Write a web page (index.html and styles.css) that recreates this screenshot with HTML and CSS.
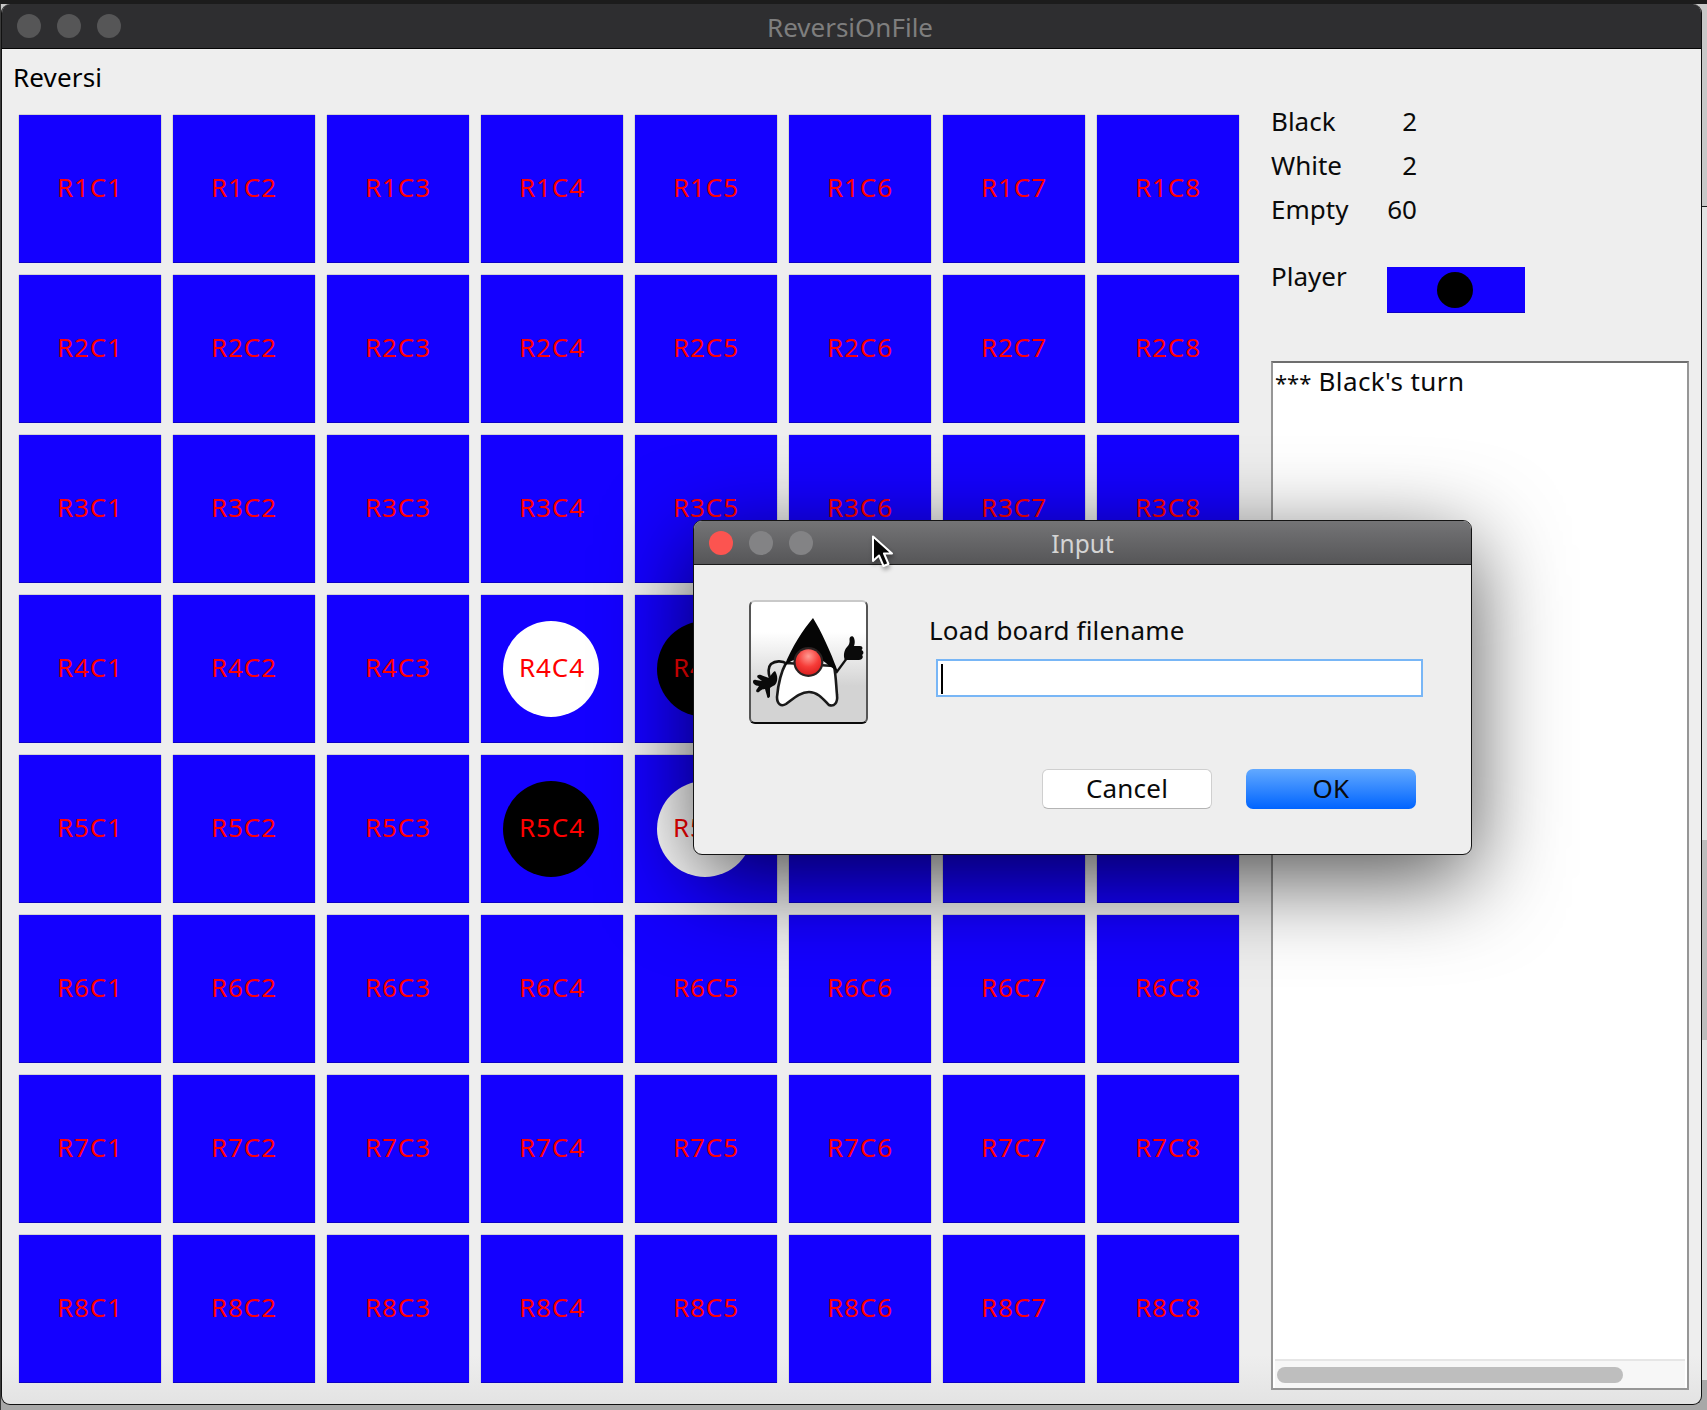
FILE: index.html
```html
<!DOCTYPE html>
<html lang="en">
<head>
<meta charset="utf-8">
<title>ReversiOnFile</title>
<link rel="stylesheet" href="styles.css">
</head>
<body>
<div class="desktop">
  <main class="window">
    <header class="titlebar">
      <div class="lights"><i class="light"></i><i class="light"></i><i class="light"></i></div>
      <span class="title">ReversiOnFile</span>
    </header>
    <div class="content">
      <section class="game">
        <div class="menu-title">Reversi</div>
        <div class="board">
          <div class="cell"><span class="label">R1C1</span></div><div class="cell"><span class="label">R1C2</span></div><div class="cell"><span class="label">R1C3</span></div><div class="cell"><span class="label">R1C4</span></div><div class="cell"><span class="label">R1C5</span></div><div class="cell"><span class="label">R1C6</span></div><div class="cell"><span class="label">R1C7</span></div><div class="cell"><span class="label">R1C8</span></div>
          <div class="cell"><span class="label">R2C1</span></div><div class="cell"><span class="label">R2C2</span></div><div class="cell"><span class="label">R2C3</span></div><div class="cell"><span class="label">R2C4</span></div><div class="cell"><span class="label">R2C5</span></div><div class="cell"><span class="label">R2C6</span></div><div class="cell"><span class="label">R2C7</span></div><div class="cell"><span class="label">R2C8</span></div>
          <div class="cell"><span class="label">R3C1</span></div><div class="cell"><span class="label">R3C2</span></div><div class="cell"><span class="label">R3C3</span></div><div class="cell"><span class="label">R3C4</span></div><div class="cell"><span class="label">R3C5</span></div><div class="cell"><span class="label">R3C6</span></div><div class="cell"><span class="label">R3C7</span></div><div class="cell"><span class="label">R3C8</span></div>
          <div class="cell"><span class="label">R4C1</span></div><div class="cell"><span class="label">R4C2</span></div><div class="cell"><span class="label">R4C3</span></div><div class="cell"><span class="label disc white">R4C4</span></div><div class="cell"><span class="label disc black">R4C5</span></div><div class="cell"><span class="label">R4C6</span></div><div class="cell"><span class="label">R4C7</span></div><div class="cell"><span class="label">R4C8</span></div>
          <div class="cell"><span class="label">R5C1</span></div><div class="cell"><span class="label">R5C2</span></div><div class="cell"><span class="label">R5C3</span></div><div class="cell"><span class="label disc black">R5C4</span></div><div class="cell"><span class="label disc white">R5C5</span></div><div class="cell"><span class="label">R5C6</span></div><div class="cell"><span class="label">R5C7</span></div><div class="cell"><span class="label">R5C8</span></div>
          <div class="cell"><span class="label">R6C1</span></div><div class="cell"><span class="label">R6C2</span></div><div class="cell"><span class="label">R6C3</span></div><div class="cell"><span class="label">R6C4</span></div><div class="cell"><span class="label">R6C5</span></div><div class="cell"><span class="label">R6C6</span></div><div class="cell"><span class="label">R6C7</span></div><div class="cell"><span class="label">R6C8</span></div>
          <div class="cell"><span class="label">R7C1</span></div><div class="cell"><span class="label">R7C2</span></div><div class="cell"><span class="label">R7C3</span></div><div class="cell"><span class="label">R7C4</span></div><div class="cell"><span class="label">R7C5</span></div><div class="cell"><span class="label">R7C6</span></div><div class="cell"><span class="label">R7C7</span></div><div class="cell"><span class="label">R7C8</span></div>
          <div class="cell"><span class="label">R8C1</span></div><div class="cell"><span class="label">R8C2</span></div><div class="cell"><span class="label">R8C3</span></div><div class="cell"><span class="label">R8C4</span></div><div class="cell"><span class="label">R8C5</span></div><div class="cell"><span class="label">R8C6</span></div><div class="cell"><span class="label">R8C7</span></div><div class="cell"><span class="label">R8C8</span></div>
        </div>
      </section>
      <aside class="side">
        <dl class="stats">
          <dt>Black</dt><dd>2</dd>
          <dt>White</dt><dd>2</dd>
          <dt>Empty</dt><dd>60</dd>
        </dl>
        <div class="player">
          <span class="player-label">Player</span>
          <div class="player-box"><i class="player-disc"></i></div>
        </div>
        <div class="log">
          <div class="log-text"><span class="stars">***</span> Black's turn</div>
          <div class="scrollbar"><div class="thumb"></div></div>
        </div>
      </aside>
    </div>
  </main>
</div>

<div class="dialog">
  <header class="dialog-bar">
    <div class="lights dialog-lights"><i class="light close"></i><i class="light idle"></i><i class="light idle"></i></div>
    <span class="dialog-title">Input</span>
  </header>
  <div class="dialog-body">
    <div class="duke-icon">
      <svg class="duke" viewBox="0 0 119 124" aria-hidden="true">
        <defs>
          <radialGradient id="nose" cx="50%" cy="28%" r="75%">
            <stop offset="0" stop-color="#ff9c94"/>
            <stop offset=".55" stop-color="#f63c38"/>
            <stop offset="1" stop-color="#d81e1e"/>
          </radialGradient>
        </defs>
        <path d="M38 64C33 60 26 61 22 64C19 67 19 73 21 78" fill="none" stroke="#111" stroke-width="2.6"/>
        <path d="M26 71C29 76 29 81 26 85C24 86 22 87 21 88L21 96C21 98 18 99 18 96L16 89C14 89 12 90 10 92C8 93 6 91 8 89L10 86C8 86 6 85 5 84C3 82 4 79 7 80L13 81L9 78C7 76 9 74 12 75L20 78C22 75 24 72 26 71Z" fill="#0a0a0a"/>
        <path d="M87 73L98 58" fill="none" stroke="#111" stroke-width="2.2"/>
        <path d="M96 60C94 56 95 50 98 47C100 45 101 43 100.5 39C100.5 36 104 35 105 38C106 41 106 43 105 46L111 46C114 46 114 49 112.5 50C115 51 115 54 113 55C115 57 113 60 110 60Z" fill="#0a0a0a"/>
        <path d="M37 63C32 72 29 86 28 97C28 104 32 107 37 104C44 99 51 92 60 92C69 92 75 100 80 105C85 107 89 103 88 95C87 84 87 76 85 66Z" fill="#fff" stroke="#1a1a1a" stroke-width="2.6" stroke-linejoin="round"/>
        <path d="M64 18C54 30 43 46 35 67C40 62 43 60 46 60L73 60C78 64 82 67 89 72C81 50 72 31 64 18Z" fill="#050505"/>
        <circle cx="59.4" cy="62" r="15" fill="#2a2222"/>
        <circle cx="59.4" cy="62" r="12.8" fill="url(#nose)"/>
      </svg>
    </div>
    <div class="form">
      <label class="prompt" for="filename">Load board filename</label>
      <div class="field" id="filename"><i class="caret"></i></div>
      <div class="actions">
        <button class="btn">Cancel</button>
        <button class="btn primary">OK</button>
      </div>
    </div>
  </div>
</div>

<svg class="cursor" viewBox="0 0 26 34" aria-hidden="true">
  <path d="M2 1.5V26L8 20.5L12.5 31L17.5 29L13 18.5H21Z" fill="#050505" stroke="#fff" stroke-width="2" stroke-linejoin="round"/>
</svg>
</body>
</html>
```

FILE: styles.css
```css
* { box-sizing: border-box; }
html { margin: 0; height: 1410px; overflow: hidden; }
body {
  margin: 0;
  width: 1707px;
  height: 1410px;
  overflow: hidden;
  font-family: "Noto Sans", "Open Sans", sans-serif;
  position: relative;
  background:
    linear-gradient(#1c1c1c 0 4px, transparent 4px),
    linear-gradient(to right, #3a3a3a 0 1px, transparent 1px),
    linear-gradient(to bottom, #c8c8c8 0 206px, #1a1a1a 206px 207px, #e2e2e2 207px 840px, #bdbdbd 840px 1040px, #e2e2e2 1040px 1380px, #a8a8a8 1380px);
}
.desktop { padding: 4px 5px 5px 1px; height: 1410px; }
.window {
  height: 1401px;
  display: flex;
  flex-direction: column;
  background: linear-gradient(to bottom, #eeeeee 0 96.5%, #e3e3e3 100%);
  border: 1px solid #111;
  border-top: 0;
  border-radius: 9px;
  overflow: hidden;
}
.titlebar {
  position: relative;
  flex: 0 0 45px;
  display: flex;
  align-items: center;
  background: #2e2e30;
  border-bottom: 1px solid #050505;
}
.lights { display: flex; gap: 16px; padding-left: 15px; }
.light { width: 24px; height: 24px; border-radius: 50%; background: #565657; display: block; }
.title {
  position: absolute;
  left: -3px;
  right: 0;
  top: 7px;
  text-align: center;
  font-size: 26px;
  line-height: 32px;
  color: #7e7e7e;
}
.content { flex: 1; display: flex; padding-left: 17px; }
.game { width: 1252px; }
.menu-title {
  height: 66px;
  margin-left: -6px;
  padding-top: 8px;
  font-size: 26px;
  line-height: 40px;
  color: #000;
  letter-spacing: .15px;
}
.board {
  display: grid;
  grid-template-columns: repeat(8, 142px);
  grid-template-rows: repeat(8, 148px);
  gap: 12px;
}
.cell {
  display: flex;
  align-items: center;
  justify-content: center;
  background: #1400ff;
  border-bottom: 1px solid #0c00c4;
  box-shadow: 0 -1px 0 #d2d2d2, 1px 0 0 #d8d8d8, -1px 0 0 #d8d8d8;
}
.label {
  font-size: 26px;
  line-height: 32px;
  color: #f00;
  letter-spacing: .9px;
  margin-top: -4px;
}
.disc {
  width: 96px;
  height: 96px;
  margin: 0 0 0 -2px;
  padding: 0 0 4px 2px;
  border-radius: 50%;
  display: flex;
  align-items: center;
  justify-content: center;
}
.disc.white { background: #fff; }
.disc.black { background: #000; }
.side { flex: 1; padding-top: 50px; padding-right: 12px; }
.stats {
  margin: 0;
  display: grid;
  grid-template-columns: 1fr auto;
  grid-auto-rows: 44px;
  width: 146px;
  font-size: 26px;
  line-height: 44px;
  color: #0a0a0a;
}
.stats dt, .stats dd { margin: 0; }
.stats dd { text-align: right; }
.player {
  display: flex;
  margin-top: 36px;
}
.player-label {
  width: 116px;
  margin-top: -11px;
  font-size: 26px;
  line-height: 40px;
  color: #0a0a0a;
}
.player-box {
  width: 138px;
  height: 46px;
  display: flex;
  align-items: center;
  justify-content: center;
  background: #1400ff;
  border-bottom: 1px solid #0c00c4;
}
.player-disc { width: 36px; height: 36px; border-radius: 50%; background: #000; display: block; margin-left: -2px; }
.log {
  margin-top: 48px;
  height: 1029px;
  background: #fff;
  border: 2px solid #969696;
  border-top-color: #6e6e6e;
  display: flex;
  flex-direction: column;
  justify-content: space-between;
}
.log-text {
  padding: 0 0 0 2px;
  font-size: 26px;
  line-height: 36px;
  letter-spacing: .4px;
  color: #0a0a0a;
}
.stars { font-size: 22px; letter-spacing: 0; }
.scrollbar {
  margin: 0 2px;
  height: 29px;
  padding: 6px 0 0 2px;
  background: #f7f7f7;
  border-top: 2px solid #e6e6e6;
}
.thumb { width: 346px; height: 16px; border-radius: 8px; background: #bebebe; }

.dialog {
  position: absolute;
  left: 693px;
  top: 520px;
  width: 779px;
  height: 335px;
  background: #eeeeee;
  border: 1px solid #141414;
  border-radius: 9px;
  box-shadow: 0 24px 90px rgba(0, 0, 0, .68);
}
.dialog-bar {
  position: relative;
  height: 44px;
  display: flex;
  align-items: center;
  background: linear-gradient(#747476, #565658);
  border-bottom: 1px solid #1a1a1a;
  border-radius: 8px 8px 0 0;
}
.dialog-lights { padding-left: 15px; }
.light.close { background: #fc5450; }
.light.idle { background: #838385; }
.dialog-title {
  position: absolute;
  left: 0;
  right: 0;
  top: 7px;
  text-align: center;
  font-size: 24.5px;
  line-height: 32px;
  color: #d4d4d4;
}
.dialog-body { display: flex; padding: 35px 0 0 55px; }
.duke-icon {
  width: 119px;
  height: 124px;
  flex: none;
  border: 2px solid #c9c9c9;
  border-bottom-color: #0a0a0a;
  border-left-color: #555;
  border-right-color: #555;
  border-radius: 6px;
  background: linear-gradient(#fff 0 25%, #d3d3d3 70%);
}
.duke { display: block; width: 119px; height: 124px; margin: -2px; }
.form { margin-left: 61px; }
.prompt {
  display: block;
  font-size: 26px;
  line-height: 36px;
  color: #0a0a0a;
  padding-top: 12px;
  letter-spacing: .15px;
}
.field {
  margin: 11px 0 0 7px;
  width: 487px;
  height: 38px;
  padding: 3px 0 0 3px;
  background: #fff;
  border: 2px solid #78b6f6;
}
.caret { display: block; width: 2px; height: 30px; background: #000; }
.actions { display: flex; gap: 34px; margin: 72px 0 0 113px; }
.btn {
  width: 170px;
  height: 40px;
  padding: 0 0 2px;
  font-family: inherit;
  font-size: 26px;
  line-height: 36px;
  letter-spacing: .2px;
  color: #0a0a0a;
  background: #fff;
  border: 1px solid #cfcfcf;
  border-bottom-color: #b4b4b4;
  border-radius: 6px;
}
.btn.primary {
  background: linear-gradient(#62a9ff, #0064ff);
  border: 0;
  border-radius: 7px;
}
.cursor { position: absolute; left: 871px; top: 535px; width: 26px; height: 34px; filter: drop-shadow(1px 3px 2px rgba(0,0,0,.35)); }
```
